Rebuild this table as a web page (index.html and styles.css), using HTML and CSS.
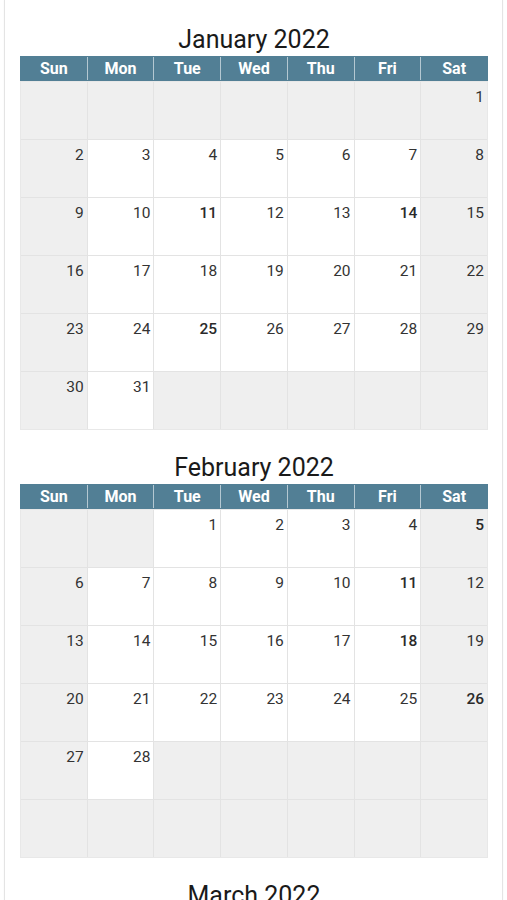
FILE: index.html
```html
<!DOCTYPE html>
<html lang="en">
<head>
<meta charset="utf-8">
<title>Calendar 2022</title>
<link rel="stylesheet" href="styles.css">
</head>
<body>
<div class="card">
  <section class="month">
    <h2 class="title">January 2022</h2>
    <div class="head">
      <div>Sun</div><div>Mon</div><div>Tue</div><div>Wed</div><div>Thu</div><div>Fri</div><div>Sat</div>
    </div>
    <div class="grid">
      <div class="off"></div><div class="off"></div><div class="off"></div><div class="off"></div><div class="off"></div><div class="off"></div><div class="off">1</div>
      <div class="off">2</div><div>3</div><div>4</div><div>5</div><div>6</div><div>7</div><div class="off">8</div>
      <div class="off">9</div><div>10</div><div class="hi">11</div><div>12</div><div>13</div><div class="hi">14</div><div class="off">15</div>
      <div class="off">16</div><div>17</div><div>18</div><div>19</div><div>20</div><div>21</div><div class="off">22</div>
      <div class="off">23</div><div>24</div><div class="hi">25</div><div>26</div><div>27</div><div>28</div><div class="off">29</div>
      <div class="off">30</div><div>31</div><div class="off"></div><div class="off"></div><div class="off"></div><div class="off"></div><div class="off"></div>
    </div>
  </section>
  <section class="month">
    <h2 class="title">February 2022</h2>
    <div class="head">
      <div>Sun</div><div>Mon</div><div>Tue</div><div>Wed</div><div>Thu</div><div>Fri</div><div>Sat</div>
    </div>
    <div class="grid">
      <div class="off"></div><div class="off"></div><div>1</div><div>2</div><div>3</div><div>4</div><div class="off hi">5</div>
      <div class="off">6</div><div>7</div><div>8</div><div>9</div><div>10</div><div class="hi">11</div><div class="off">12</div>
      <div class="off">13</div><div>14</div><div>15</div><div>16</div><div>17</div><div class="hi">18</div><div class="off">19</div>
      <div class="off">20</div><div>21</div><div>22</div><div>23</div><div>24</div><div>25</div><div class="off hi">26</div>
      <div class="off">27</div><div>28</div><div class="off"></div><div class="off"></div><div class="off"></div><div class="off"></div><div class="off"></div>
      <div class="off"></div><div class="off"></div><div class="off"></div><div class="off"></div><div class="off"></div><div class="off"></div><div class="off"></div>
    </div>
  </section>
  <section class="month">
    <h2 class="title">March 2022</h2>
    <div class="head">
      <div>Sun</div><div>Mon</div><div>Tue</div><div>Wed</div><div>Thu</div><div>Fri</div><div>Sat</div>
    </div>
    <div class="grid">
      <div class="off"></div><div class="off"></div><div>1</div><div>2</div><div>3</div><div>4</div><div class="off">5</div>
      <div class="off">6</div><div>7</div><div>8</div><div>9</div><div>10</div><div>11</div><div class="off">12</div>
      <div class="off">13</div><div>14</div><div>15</div><div>16</div><div>17</div><div>18</div><div class="off">19</div>
      <div class="off">20</div><div>21</div><div>22</div><div>23</div><div>24</div><div>25</div><div class="off">26</div>
      <div class="off">27</div><div>28</div><div>29</div><div>30</div><div>31</div><div class="off"></div><div class="off"></div>
      <div class="off"></div><div class="off"></div><div class="off"></div><div class="off"></div><div class="off"></div><div class="off"></div><div class="off"></div>
    </div>
  </section>
</div>
</body>
</html>
```

FILE: styles.css
```css
* { box-sizing: border-box; }

html, body {
  margin: 0;
  padding: 0;
  background: #ffffff;
}

body {
  font-family: Roboto, "Liberation Sans", Arial, sans-serif;
  color: #333333;
}

.card {
  margin: 0 4px;
  padding: 2px 14px 30px 15px;
  border: 1px solid #e4e4e4;
  border-top: 0;
  box-shadow: 0 0 2px rgba(0, 0, 0, 0.04);
}

.month {
  margin-top: 21px;
}

.title {
  margin: 0;
  font-size: 25px;
  line-height: 33px;
  font-weight: 400;
  text-align: center;
  color: #1a1a1a;
}

.head {
  display: grid;
  grid-template-columns: repeat(7, 1fr);
  gap: 1px;
  background: #b4c8d2;
  border: 1px solid #527f95;
}

.head div {
  background: #527f95;
  color: #ffffff;
  font-size: 16px;
  font-weight: 700;
  line-height: 23px;
  height: 23px;
  text-align: center;
}

.grid {
  display: grid;
  grid-template-columns: repeat(7, 1fr);
  grid-auto-rows: 57px;
  gap: 1px;
  background: #e3e3e3;
  border: 1px solid #e8e8e8;
}

.grid div {
  background: #ffffff;
  padding: 6px 3px 0 0;
  text-align: right;
  font-size: 15.5px;
  line-height: 18px;
  color: #333333;
}

.grid div.off {
  background: #efefef;
}

.grid div.hi {
  font-weight: 500;
  color: #2a2a2a;
}
```
